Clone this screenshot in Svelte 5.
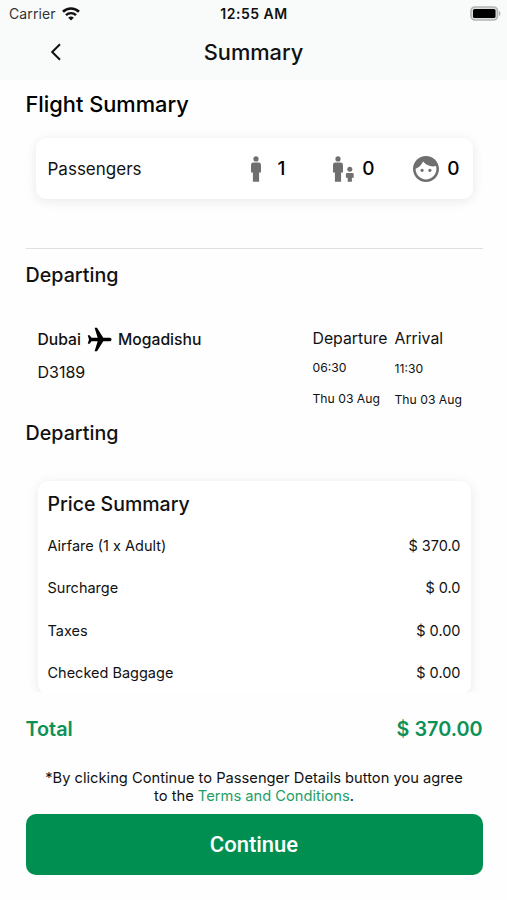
<script>
    const prices = [
        { label: "Airfare (1 x Adult)", value: "$ 370.0" },
        { label: "Surcharge", value: "$ 0.0" },
        { label: "Taxes", value: "$ 0.00" },
        { label: "Checked Baggage", value: "$ 0.00" },
    ];

    const times = [
        { title: "Departure", time: "06:30", date: "Thu 03 Aug" },
        { title: "Arrival", time: "11:30", date: "Thu 03 Aug" },
    ];
</script>

<div class="screen">
    <header>
        <div class="status-bar">
            <div class="carrier">
                <span>Carrier</span>
                <svg width="18" height="14" viewBox="0 0 18 14" fill="none" stroke="#111">
                    <path d="M1 4.8a11.4 11.4 0 0 1 16 0" stroke-width="2.6" />
                    <path d="M4 8.2a7.1 7.1 0 0 1 10 0" stroke-width="2.4" />
                    <path d="M9 13.6 6.2 10.8a4 4 0 0 1 5.6 0z" fill="#111" stroke="none" />
                </svg>
            </div>
            <span class="clock">12:55 AM</span>
            <svg class="battery" width="32" height="15" viewBox="0 0 32 15">
                <rect x="2" y="1" width="26.5" height="13" rx="4" fill="#ddd" stroke="#b3b5b4" stroke-width="1.6" />
                <rect x="4" y="3" width="22.5" height="9" rx="1.6" fill="#000" />
                <path d="M30 5v5c1.800-.8 1.800-4.200 0-5z" fill="#a9abaa" />
            </svg>
        </div>
        <div class="nav">
            <button class="back" aria-label="Back">
                <svg width="12" height="18" viewBox="0 0 12 18" fill="none" stroke="#111" stroke-width="2">
                    <path d="M10 1.3 2.2 9l7.8 7.7" />
                </svg>
            </button>
            <h1>Summary</h1>
        </div>
    </header>

    <main>
        <h2 class="page-title">Flight Summary</h2>

        <div class="card passengers">
            <span class="label">Passengers</span>
            <div class="count adult">
                <svg width="10" height="26" viewBox="0 0 10 26" fill="#6f6f6f">
                    <circle cx="5" cy="2.9" r="2.6" />
                    <path d="M2.400 6.600h5.200A2.400 2.400 0 0 1 10 9v7.400H8.100V25.700H1.900V16.400H0V9a2.400 2.400 0 0 1 2.400-2.400z" />
                </svg>
                <span>1</span>
            </div>
            <div class="count child">
                <svg width="21" height="26" viewBox="0 0 21 26" fill="#6f6f6f">
                    <circle cx="5" cy="2.9" r="2.6" />
                    <path d="M2.400 6.600h5.200A2.400 2.400 0 0 1 10 9v7.400H8.100V25.700H1.900V16.400H0V9a2.400 2.400 0 0 1 2.400-2.400z" />
                    <circle cx="16.8" cy="13.3" r="2.5" />
                    <path d="M14.200 17h5.200a1.300 1.300 0 0 1 1.300 1.300v3.500h-1.800v3.900h-4.200v-3.900h-1.800v-3.500a1.300 1.300 0 0 1 1.300-1.300z" />
                </svg>
                <span>0</span>
            </div>
            <div class="count infant">
                <svg width="26" height="26" viewBox="2 2 20 20" fill="#6f6f6f">
                    <path
                        d="M10.250 13c0 .69-.56 1.250-1.250 1.250S7.750 13.690 7.750 13s.56-1.250 1.250-1.250 1.250.56 1.250 1.250zM15 11.750c-.69 0-1.250.56-1.250 1.250s.56 1.250 1.250 1.250 1.250-.56 1.250-1.250-.56-1.250-1.250-1.250zm7 .25c0 5.520-4.480 10-10 10S2 17.520 2 12 6.480 2 12 2s10 4.480 10 10zm-2 0c0-.78-.12-1.530-.33-2.240-.7.150-1.420.24-2.170.24-3.130 0-5.920-1.440-7.760-3.690C8.690 8.870 6.600 10.880 4 11.860c.01.040 0 .09 0 .140 0 4.410 3.590 8 8 8s8-3.590 8-8z"
                    />
                </svg>
                <span>0</span>
            </div>
        </div>

        <hr />

        <h3>Departing</h3>
        <div class="flight">
            <div class="route">
                <div class="cities">
                    <span>Dubai</span>
                    <svg width="25" height="25" viewBox="0 0 26 26" fill="#000">
                        <path
                            d="M25.500 13c0-1.100-.9-1.900-1.900-1.900h-6.700L10.400.8H7.900l3.200 10.300H4.700L2.700 8.500H.8L2.100 13 .8 17.500h1.900l2-2.600h6.400L7.900 25.200h2.500l6.500-10.300h6.700c1 0 1.900-.8 1.900-1.900z"
                        />
                    </svg>
                    <span>Mogadishu</span>
                </div>
                <div class="code">D3189</div>
            </div>
            {#each times as t}
                <div class="leg">
                    <div class="leg-title">{t.title}</div>
                    <div class="small">{t.time}</div>
                    <div class="small date">{t.date}</div>
                </div>
            {/each}
        </div>
        <h3>Departing</h3>

        <div class="scroll">
            <div class="card price-card">
                <h4>Price Summary</h4>
                {#each prices as p}
                    <div class="price-row">
                        <span>{p.label}</span>
                        <span>{p.value}</span>
                    </div>
                {/each}
            </div>
        </div>
    </main>

    <footer>
        <div class="total">
            <span>Total</span>
            <span>$ 370.00</span>
        </div>
        <p class="terms">
            *By clicking Continue to Passenger Details button you agree<br />to the
            <span class="link">Terms and Conditions</span>.
        </p>
        <button class="continue">Continue</button>
    </footer>
</div>

<style>
    :global(body) {
        margin: 0;
        background: #fefefe;
    }

    .screen {
        width: 507px;
        height: 900px;
        display: flex;
        flex-direction: column;
        overflow: hidden;
        background: #fefefe;
        color: #111;
        font-family: Inter, "Liberation Sans", sans-serif;
    }

    h1,
    h2,
    h3,
    h4,
    p {
        margin: 0;
        font-weight: 500;
    }

    svg {
        display: block;
        flex: none;
    }

    button {
        padding: 0;
        border: none;
        background: none;
        font-family: inherit;
    }

    header {
        height: 80px;
        background: #f9fbfa;
    }

    .status-bar {
        height: 27px;
        display: grid;
        grid-template-columns: 1fr auto 1fr;
        align-items: center;
        padding: 0 6px 0 9px;
        font-size: 14px;
    }

    .carrier {
        display: flex;
        align-items: center;
        gap: 6px;
        color: #333;
        letter-spacing: 0.1px;
    }

    .clock {
        font-weight: 600;
        letter-spacing: 0.5px;
        margin-right: 2px;
    }

    .battery {
        justify-self: end;
    }

    .nav {
        height: 50px;
        display: grid;
        grid-template-columns: 50px 1fr 50px;
        align-items: center;
    }

    .back {
        justify-self: end;
        margin-right: -12px;
    }

    h1 {
        text-align: center;
        font-size: 21.8px;
        line-height: 50px;
    }

    main {
        padding: 0 24.5px 0 25.5px;
    }

    .page-title {
        font-size: 21.8px;
        line-height: 48px;
        color: #000;
    }

    .card {
        background: #fff;
        border-radius: 10px;
        box-sizing: border-box;
        box-shadow: 0 2px 12px rgba(0, 0, 0, 0.09);
    }

    .passengers {
        height: 61px;
        margin: 10px 10px 0;
        padding: 0 13px 0 12px;
        display: flex;
        align-items: center;
        font-size: 17px;
    }

    .label {
        flex: 1;
    }

    .count {
        display: flex;
        align-items: center;
        justify-content: space-between;
        font-size: 19px;
        font-weight: 500;
        color: #000;
    }

    .adult {
        width: 35px;
        margin-right: 47px;
    }

    .child {
        width: 42px;
        margin-right: 38px;
    }

    .infant {
        width: 47px;
    }

    hr {
        height: 1px;
        margin: 49px 0 0;
        border: none;
        background: #dfdfdf;
    }

    h3 {
        font-size: 19.7px;
        line-height: 53px;
    }

    .flight {
        height: 105px;
        display: flex;
        padding: 25px 0 0 12px;
        box-sizing: border-box;
    }

    .route {
        width: 275px;
    }

    .cities {
        display: flex;
        align-items: center;
        gap: 6px;
        height: 24px;
        font-size: 15.7px;
        font-weight: 500;
    }

    .code {
        margin-top: 9px;
        font-size: 16px;
        line-height: 24px;
    }

    .leg {
        width: 82px;
    }

    .leg-title {
        font-size: 15.8px;
        line-height: 24px;
        white-space: nowrap;
    }

    .small {
        margin-top: 7px;
        font-size: 12.2px;
        line-height: 20px;
        white-space: nowrap;
    }

    .date {
        margin-top: 11px;
    }

    .leg + .leg .small:not(.date) {
        margin-top: 8px;
    }

    .scroll {
        height: 232px;
        margin: 0 -13px;
        padding: 21px 25px 0;
        box-sizing: border-box;
        overflow: hidden;
    }

    .price-card {
        height: 213px;
        padding: 3px 10px 0;
    }

    h4 {
        font-size: 19.5px;
        line-height: 41px;
    }

    .price-row {
        display: flex;
        justify-content: space-between;
        font-size: 14.5px;
        line-height: 42.4px;
    }

    footer {
        padding: 0 24.5px 0 25.5px;
        margin-top: 22px;
    }

    .total {
        display: flex;
        justify-content: space-between;
        font-size: 19.8px;
        line-height: 30px;
        font-weight: 600;
        color: #0b9156;
    }

    .terms {
        margin-top: 26px;
        text-align: center;
        font-size: 14.7px;
        line-height: 17.5px;
        font-weight: 400;
    }

    .link {
        color: #1f9d66;
    }

    .continue {
        width: 100%;
        height: 61px;
        margin-top: 9px;
        display: block;
        border-radius: 10px;
        background: #008f50;
        color: #fff;
        font-family: Roboto, sans-serif;
        font-size: 22px;
        font-weight: 500;
    }
</style>
